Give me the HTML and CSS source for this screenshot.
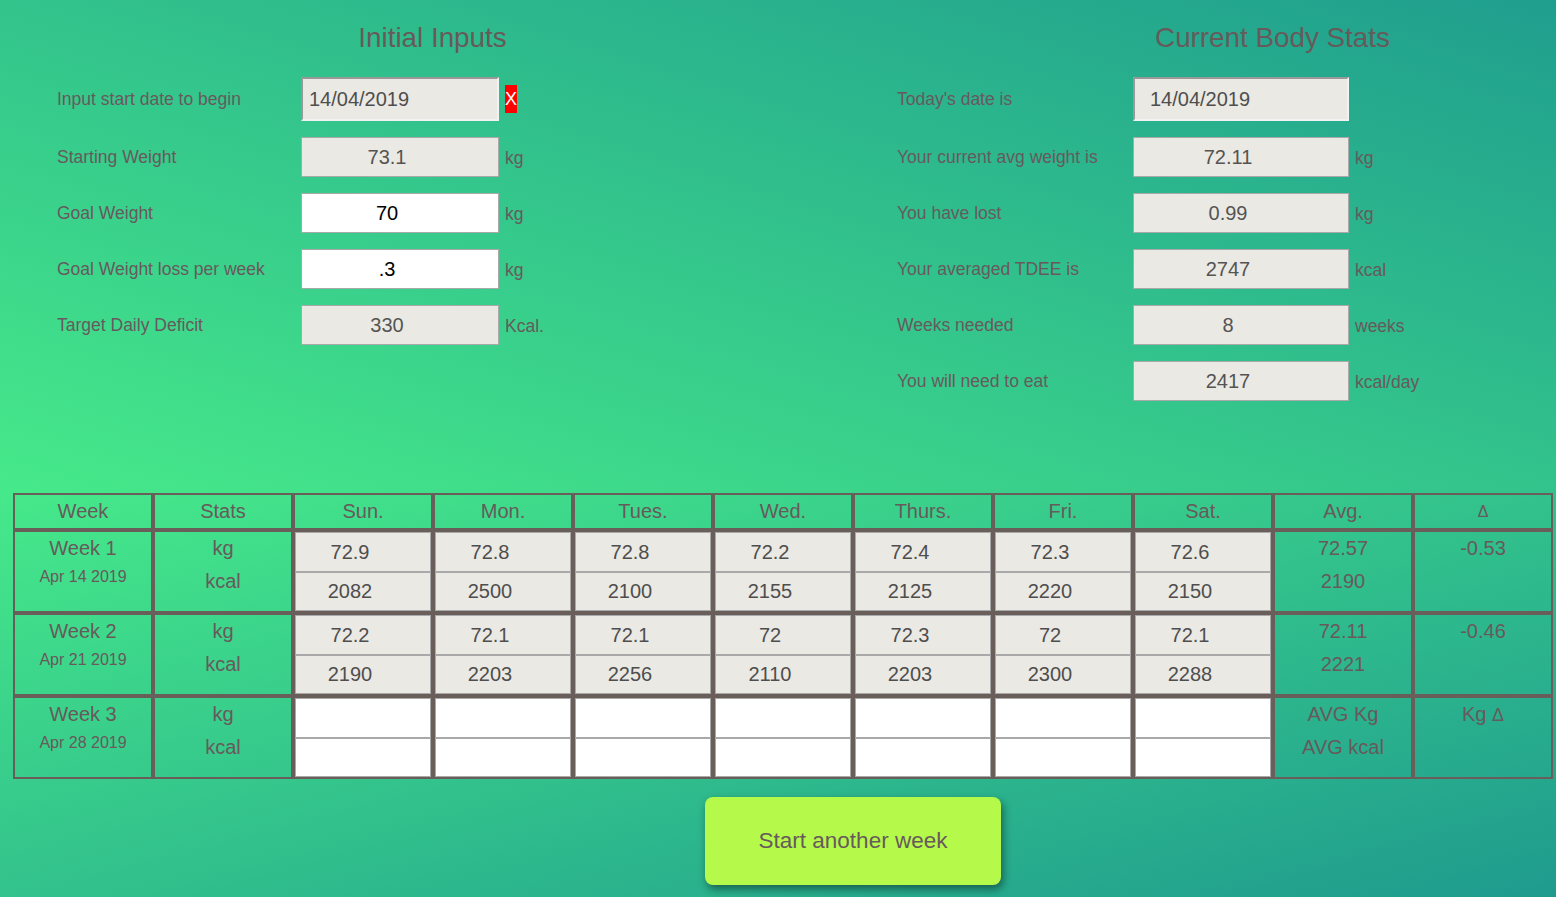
FILE: index.html
```html
<!DOCTYPE html>
<html lang="en">
<head>
<meta charset="utf-8">
<title>Weight Tracker</title>
<link rel="stylesheet" href="styles.css">
</head>
<body>
<div class="top">
  <section class="panel panel-left">
    <h2 class="panel-title">Initial Inputs</h2>
    <div class="row row-date">
      <label class="lbl">Input start date to begin</label>
      <input class="field field-date" type="text" value="14/04/2019">
      <span class="clear">X</span>
    </div>
    <div class="row">
      <label class="lbl">Starting Weight</label>
      <input class="field field-ro" type="text" value="73.1" readonly>
      <span class="unit">kg</span>
    </div>
    <div class="row">
      <label class="lbl">Goal Weight</label>
      <input class="field field-edit" type="text" value="70">
      <span class="unit">kg</span>
    </div>
    <div class="row">
      <label class="lbl">Goal Weight loss per week</label>
      <input class="field field-edit" type="text" value=".3">
      <span class="unit">kg</span>
    </div>
    <div class="row">
      <label class="lbl">Target Daily Deficit</label>
      <input class="field field-ro" type="text" value="330" readonly>
      <span class="unit">Kcal.</span>
    </div>
  </section>
  <section class="panel panel-right">
    <h2 class="panel-title">Current Body Stats</h2>
    <div class="row row-date">
      <label class="lbl">Today's date is</label>
      <input class="field field-date field-date-r" type="text" value="14/04/2019" readonly>
    </div>
    <div class="row">
      <label class="lbl">Your current avg weight is</label>
      <input class="field field-ro" type="text" value="72.11" readonly>
      <span class="unit">kg</span>
    </div>
    <div class="row">
      <label class="lbl">You have lost</label>
      <input class="field field-ro" type="text" value="0.99" readonly>
      <span class="unit">kg</span>
    </div>
    <div class="row">
      <label class="lbl">Your averaged TDEE is</label>
      <input class="field field-ro" type="text" value="2747" readonly>
      <span class="unit">kcal</span>
    </div>
    <div class="row">
      <label class="lbl">Weeks needed</label>
      <input class="field field-ro" type="text" value="8" readonly>
      <span class="unit">weeks</span>
    </div>
    <div class="row">
      <label class="lbl">You will need to eat</label>
      <input class="field field-ro" type="text" value="2417" readonly>
      <span class="unit">kcal/day</span>
    </div>
  </section>
</div>

<div class="bottom">
  <table class="log">
    <thead>
      <tr>
        <th>Week</th><th>Stats</th><th>Sun.</th><th>Mon.</th><th>Tues.</th><th>Wed.</th><th>Thurs.</th><th>Fri.</th><th>Sat.</th><th>Avg.</th><th class="delta">&#916;</th>
      </tr>
    </thead>
    <tbody>
      <tr>
        <td class="info"><div>Week 1</div><div class="date">Apr 14 2019</div></td>
        <td class="info"><div>kg</div><div>kcal</div></td>
        <td class="day"><input class="cell" value="72.9"><input class="cell" value="2082"></td>
        <td class="day"><input class="cell" value="72.8"><input class="cell" value="2500"></td>
        <td class="day"><input class="cell" value="72.8"><input class="cell" value="2100"></td>
        <td class="day"><input class="cell" value="72.2"><input class="cell" value="2155"></td>
        <td class="day"><input class="cell" value="72.4"><input class="cell" value="2125"></td>
        <td class="day"><input class="cell" value="72.3"><input class="cell" value="2220"></td>
        <td class="day"><input class="cell" value="72.6"><input class="cell" value="2150"></td>
        <td class="info"><div>72.57</div><div>2190</div></td>
        <td class="info"><div>-0.53</div></td>
      </tr>
      <tr>
        <td class="info"><div>Week 2</div><div class="date">Apr 21 2019</div></td>
        <td class="info"><div>kg</div><div>kcal</div></td>
        <td class="day"><input class="cell" value="72.2"><input class="cell" value="2190"></td>
        <td class="day"><input class="cell" value="72.1"><input class="cell" value="2203"></td>
        <td class="day"><input class="cell" value="72.1"><input class="cell" value="2256"></td>
        <td class="day"><input class="cell" value="72"><input class="cell" value="2110"></td>
        <td class="day"><input class="cell" value="72.3"><input class="cell" value="2203"></td>
        <td class="day"><input class="cell" value="72"><input class="cell" value="2300"></td>
        <td class="day"><input class="cell" value="72.1"><input class="cell" value="2288"></td>
        <td class="info"><div>72.11</div><div>2221</div></td>
        <td class="info"><div>-0.46</div></td>
      </tr>
      <tr>
        <td class="info"><div>Week 3</div><div class="date">Apr 28 2019</div></td>
        <td class="info"><div>kg</div><div>kcal</div></td>
        <td class="day"><input class="cell cell-empty" value=""><input class="cell cell-empty" value=""></td>
        <td class="day"><input class="cell cell-empty" value=""><input class="cell cell-empty" value=""></td>
        <td class="day"><input class="cell cell-empty" value=""><input class="cell cell-empty" value=""></td>
        <td class="day"><input class="cell cell-empty" value=""><input class="cell cell-empty" value=""></td>
        <td class="day"><input class="cell cell-empty" value=""><input class="cell cell-empty" value=""></td>
        <td class="day"><input class="cell cell-empty" value=""><input class="cell cell-empty" value=""></td>
        <td class="day"><input class="cell cell-empty" value=""><input class="cell cell-empty" value=""></td>
        <td class="info"><div>AVG Kg</div><div>AVG kcal</div></td>
        <td class="info"><div>Kg <span class="delta-sm">&#916;</span></div></td>
      </tr>
    </tbody>
  </table>
  <div class="actions">
    <button class="btn-week" type="button">Start another week</button>
  </div>
</div>
</body>
</html>
```

FILE: styles.css
```css
html, body {
  margin: 0;
  padding: 0;
}

body {
  width: 1556px;
  height: 897px;
  overflow: hidden;
  font-family: "Liberation Sans", Arial, sans-serif;
  color: #675a5b;
}

.top {
  height: 490px;
  box-sizing: border-box;
  padding: 20px 0 0 57px;
  display: flex;
  gap: 89px;
  overflow: hidden;
  background: linear-gradient(to top right, #46e98a 0%, #1f9e8e 100%);
}

.panel {
  width: 751px;
  flex: 0 0 751px;
  display: flex;
  flex-direction: column;
  gap: 16px;
}

.panel-title {
  margin: 0 0 5px 0;
  font-size: 27.8px;
  line-height: 36px;
  font-weight: normal;
  text-align: center;
  color: #675a5b;
}

.row {
  display: flex;
  align-items: baseline;
  height: 40px;
}

.row-date {
  height: 44px;
}

.lbl {
  font-size: 17.5px;
  color: #675a5d;
  flex: 0 0 auto;
  position: relative;
  top: -1px;
}

.panel-left .lbl {
  width: 244px;
}

.panel-right .lbl {
  width: 236px;
}

.field {
  box-sizing: border-box;
  height: 40px;
  margin: 0;
  padding: 0 26px 0 0;
  border: 1px solid #a9a9a9;
  background: #ebe9e3;
  font-family: "Liberation Sans", Arial, sans-serif;
  font-size: 20px;
  color: #545454;
  text-align: center;
  outline: none;
}

.panel-left .field {
  width: 198px;
}

.panel-right .field {
  width: 216px;
}

.field-edit {
  background: #ffffff;
  color: #000000;
}

.field-date {
  height: 44px;
  text-align: left;
  padding: 0 0 0 6px;
  border: 2px solid;
  border-color: #999999 #f2f2f2 #f2f2f2 #999999;
  color: #4e4e4e;
}

.field-date-r {
  padding-left: 15px;
}

.unit {
  margin-left: 6px;
  font-size: 17.5px;
  color: #675a5b;
}

.clear {
  align-self: center;
  margin-left: 6px;
  width: 12px;
  height: 28px;
  background: #ff0000;
  color: #ffffff;
  font-size: 18px;
  line-height: 28px;
  text-align: center;
}

.bottom {
  height: 407px;
  box-sizing: border-box;
  padding: 3px 0 0 13px;
  background: linear-gradient(to bottom right, #46e98a 0%, #1f9b8e 100%);
}

.log {
  width: 1540px;
  table-layout: fixed;
  border-collapse: separate;
  border-spacing: 0;
}

.log th,
.log td {
  border: 2px solid #695e5a;
  padding: 0;
}

.log th {
  height: 32px;
  font-size: 20px;
  line-height: 33px;
  font-weight: normal;
  text-align: center;
  color: #675a5b;
}

.log th.delta {
  font-size: 16px;
}

.delta-sm {
  font-size: 18px;
}

.log td.info {
  height: 79px;
  vertical-align: top;
  text-align: center;
  font-size: 20px;
  line-height: 33px;
  color: #675a5b;
}

.log td.info .date {
  font-size: 16px;
  line-height: 24px;
}

.log td.day {
  height: 79px;
  vertical-align: top;
}

.cell {
  display: block;
  box-sizing: border-box;
  width: 100%;
  height: 40px;
  margin: 0;
  padding: 0 26px 0 0;
  border: 1px solid #a9a9a9;
  background: #ebe9e3;
  font-family: "Liberation Sans", Arial, sans-serif;
  font-size: 20px;
  color: #4e4e4e;
  text-align: center;
  outline: none;
}

.cell + .cell {
  height: 39px;
}

.cell-empty {
  background: #ffffff;
}

.actions {
  padding: 18px 0 0 692px;
}

.btn-week {
  width: 296px;
  height: 88px;
  border: none;
  border-radius: 8px;
  background: #b5f94b;
  color: #675a5b;
  font-family: "Liberation Sans", Arial, sans-serif;
  font-size: 22.5px;
  box-shadow: 2px 4px 9px rgba(0, 0, 0, 0.45);
  cursor: pointer;
}
```
